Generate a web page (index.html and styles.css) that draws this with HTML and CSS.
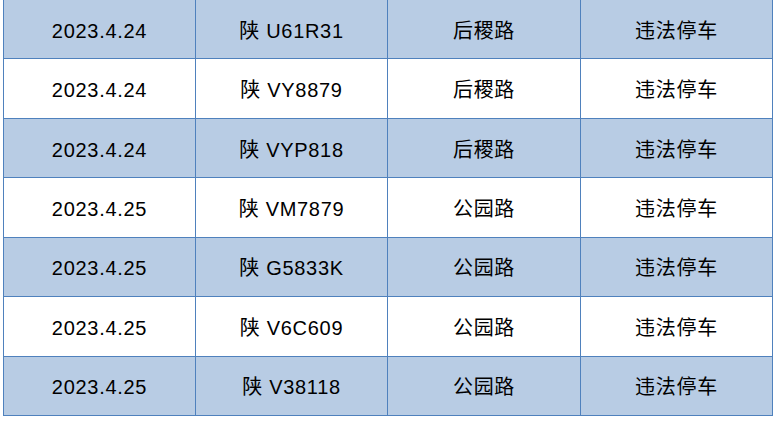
FILE: index.html
```html
<!DOCTYPE html>
<html lang="zh-CN">
<head>
<meta charset="utf-8">
<title>违法停车记录</title>
<link rel="stylesheet" href="styles.css">
</head>
<body>
<div class="grid">
  <div class="cell alt">2023.4.24</div><div class="cell alt">陕 U61R31</div><div class="cell alt">后稷路</div><div class="cell alt">违法停车</div>
  <div class="cell">2023.4.24</div><div class="cell">陕 VY8879</div><div class="cell">后稷路</div><div class="cell">违法停车</div>
  <div class="cell alt">2023.4.24</div><div class="cell alt">陕 VYP818</div><div class="cell alt">后稷路</div><div class="cell alt">违法停车</div>
  <div class="cell">2023.4.25</div><div class="cell">陕 VM7879</div><div class="cell">公园路</div><div class="cell">违法停车</div>
  <div class="cell alt">2023.4.25</div><div class="cell alt">陕 G5833K</div><div class="cell alt">公园路</div><div class="cell alt">违法停车</div>
  <div class="cell">2023.4.25</div><div class="cell">陕 V6C609</div><div class="cell">公园路</div><div class="cell">违法停车</div>
  <div class="cell alt">2023.4.25</div><div class="cell alt">陕 V38118</div><div class="cell alt">公园路</div><div class="cell alt">违法停车</div>
</div>
</body>
</html>
```
FILE: styles.css
```css
html, body {
  margin: 0;
  padding: 0;
  background: #ffffff;
}
body {
  overflow: hidden;
}
.grid {
  margin: -1px 0 0 3px;
  width: 770px;
  height: 417px;
  box-sizing: border-box;
  display: grid;
  grid-template-columns: 192px 192px 193px 192px;
  grid-template-rows: repeat(7, 1fr);
  border-left: 1px solid #4f81bd;
  border-top: 1px solid #4f81bd;
  font-family: "Liberation Sans", "Noto Sans CJK SC", sans-serif;
  font-size: 20px;
  line-height: 1;
  color: #000;
}
.cell {
  box-sizing: border-box;
  border-right: 1px solid #4f81bd;
  border-bottom: 1px solid #4f81bd;
  display: flex;
  align-items: center;
  justify-content: center;
  padding-top: 3px;
  letter-spacing: 0.7px;
  background: #ffffff;
}
.cell.alt {
  background: #b8cce4;
}
```
